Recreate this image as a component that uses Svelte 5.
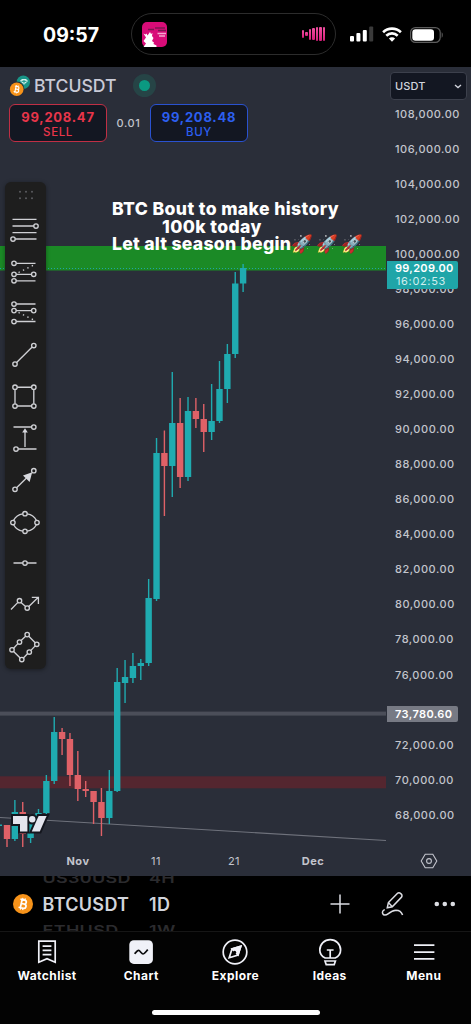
<script lang="ts">
	type Candle = { open: number; close: number; high: number; low: number };

	// y coordinates inside the plot; close above open is a rising candle
	const candles: Candle[] = [
		{ open: 758, close: 772, high: 758, low: 780 },
		{ open: 772, close: 745, high: 733, low: 774 },
		{ open: 745, close: 767, high: 735, low: 780 },
		{ open: 771, close: 755, high: 750, low: 776 },
		{ open: 755, close: 746, high: 742, low: 757 },
		{ open: 746, close: 714, high: 708, low: 747 },
		{ open: 714, close: 665, high: 650, low: 717 },
		{ open: 665, close: 672, high: 661, low: 688 },
		{ open: 672, close: 708, high: 666, low: 719 },
		{ open: 708, close: 722, high: 684, low: 734 },
		{ open: 722, close: 724, high: 714, low: 730 },
		{ open: 724, close: 735, high: 724, low: 757 },
		{ open: 735, close: 751, high: 721, low: 769 },
		{ open: 751, close: 724, high: 703, low: 757 },
		{ open: 724, close: 615, high: 601, low: 725 },
		{ open: 616, close: 610, high: 593, low: 636 },
		{ open: 611, close: 599, high: 586, low: 616 },
		{ open: 599, close: 596, high: 592, low: 613 },
		{ open: 596, close: 531, high: 512, low: 599 },
		{ open: 532, close: 386, high: 371, low: 534 },
		{ open: 386, close: 399, high: 363.5, low: 449 },
		{ open: 399, close: 356, high: 305, low: 430 },
		{ open: 356, close: 410, high: 331, low: 421 },
		{ open: 410, close: 344, high: 330, low: 414 },
		{ open: 344, close: 352, high: 331, low: 361 },
		{ open: 352, close: 365, high: 337, low: 385 },
		{ open: 365, close: 354, high: 317, low: 373 },
		{ open: 354, close: 322, high: 294, low: 356 },
		{ open: 322, close: 287, high: 277, low: 336 },
		{ open: 287, close: 216.5, high: 205, low: 291 },
		{ open: 216.5, close: 201, high: 197, low: 225 }
	];
	const step = 7.87;

	const prices = Array.from({ length: 21 }, (_, i) => 108000 - i * 2000);
	const format = (n: number) => n.toLocaleString('en-US', { minimumFractionDigits: 2 });

	const tools = [
		{
			d: 'M3.5 5.3H27.5M3.5 12H25M3.5 18.6H27.5M6.3 25H27.5',
			dots: [[27, 12], [4, 25]]
		},
		{
			d: 'M7.2 7.3H26.5M7.2 18.3H22.5M7.2 24.8H26.5',
			dashed: 'M9.5 16.5L26 8.5',
			dots: [[5, 7.3], [5, 18.3], [24.7, 18.3], [5, 24.8]]
		},
		{
			d: 'M7.2 7H26.5M7.2 13.6H22.5M7.2 24.5H26.5',
			dashed: 'M9.5 15.5L26 23.5',
			dots: [[5, 7], [5, 13.6], [24.7, 13.6], [5, 24.5]]
		},
		{ d: 'M7.6 23.4L23.2 8.1', dots: [[6, 25], [24.8, 6.5]] },
		{
			d: 'M8.2 6.2H22.6M24.8 8.4V22.8M22.6 25H8.2M6 22.8V8.4',
			dots: [[6, 6.2], [24.8, 6.2], [24.8, 25], [6, 25]]
		},
		{
			d: 'M4.5 5H22.6M16 25V9M9.2 27H27.5',
			fill: 'M16 6.2L18.8 10.4H13.2Z',
			dots: [[24.8, 5], [7, 27]]
		},
		{
			d: 'M7.6 23.7L18 13.4',
			fill: 'M23.2 8.2L20.6 18L14 11.4Z',
			dots: [[6, 25.3], [24.8, 6.7]]
		},
		{
			d: 'M4.6 14.4C6.4 11 9.8 8.6 13.7 7.9M18.3 7.9C22.2 8.6 25.6 11 27.4 14.4M27.4 18.7C25.6 22 22.2 24.4 18.3 25.1M13.7 25.1C9.8 24.4 6.4 22 4.6 18.7',
			dots: [[3.9, 16.5], [16, 7.7], [28, 16.5], [16, 25.3]]
		},
		{ d: 'M4.5 16H13.8M18.2 16H27.5', dots: [[16, 16]] },
		{
			d: 'M2 20.5L8.9 13.4M12 13.4L16.6 17.4M19.8 17.4L29.3 8.3M22.8 8.4H29.4V15',
			dots: [[10.5, 11.7], [18.2, 19]]
		},
		{
			d: 'M19.8 5.2L26.2 11.7M26.2 14.9L21.9 19.4M18.7 22.6L14.4 26.9M11.2 26.9L4.6 20.4M4.6 17.2L8.9 12.6M12.1 9.4L16.6 5.2',
			dots: [[18.2, 3.6], [27.8, 13.3], [20.3, 21], [12.8, 28.5], [3, 18.8], [10.5, 11]]
		}
	];

	const wheel = [
		{ symbol: 'US30USD', interval: '4H' },
		{ symbol: 'BTCUSDT', interval: '1D' },
		{ symbol: 'ETHUSD', interval: '1W' }
	];

	const tabs = ['Watchlist', 'Chart', 'Explore', 'Ideas', 'Menu'];
	const sound = [8, 4, 11, 12, 14, 14, 14];
</script>

{#snippet bitcoin()}
	<circle cx="10" cy="10" r="10" fill="#f7931a" />
	<g transform="rotate(13 10 10)" fill="none" stroke="#fff" stroke-width="1.7">
		<path d="M8.2 5.8V14.2M6.4 5.8H10.8a2 2 0 0 1 0 4H8.2M10.8 9.8h.5a2.2 2.2 0 0 1 0 4.4H6.4" />
		<path d="M8.6 4V5.8M11 4V5.8M8.6 14V16M11 14V16" stroke-width="1.2" />
	</g>
{/snippet}

{#snippet logo()}
	<path d="M13 749H27.4V764.5H20V757H13Z" />
	<path d="M38.6 749H46.6L39.8 764.5H31.8Z" />
	<circle cx="32.2" cy="752.2" r="3.2" />
{/snippet}

<div class="phone">
	<header class="status">
		<time>09:57</time>
		<div class="island">
			<svg class="cover" viewBox="0 0 25 25">
				<rect width="25" height="25" rx="5" fill="#d80c78" />
				<path d="M6 7.5h6M13 6h10M16 8.5h8" stroke="#7c1650" stroke-width="1.6" />
				<path d="M15.5 11.5H24M17 14h6" stroke="#f5a8d0" stroke-width="1.3" />
				<path d="M1.5 11.5l2 1 1-1 1 2 2.5-3.5 1 2 1.5-1-.5 3 1.5 2-1.5 3 2 1.5-.5 1.5 3 1.5v1.5H1.5l2.5-3.5L1.5 19l2.5-3.5z" fill="#fff" />
			</svg>
			<div class="sound">
				{#each sound as h}
					<i style="height: {h}px"></i>
				{/each}
			</div>
		</div>
		<svg class="signal" viewBox="0 0 24 16">
			<rect x="0" y="10" width="4" height="5.5" rx="1" fill="#fff" />
			<rect x="6.4" y="7" width="4" height="8.5" rx="1" fill="#fff" />
			<rect x="12.8" y="4" width="4" height="11.5" rx="1" fill="#fff" />
			<rect x="19.2" y="0.5" width="4" height="15" rx="1" fill="#3a3a3a" />
		</svg>
		<svg class="wifi" viewBox="0 0 20 15" fill="none" stroke="#fff" stroke-width="2.6">
			<path d="M1.1 5.2a12.8 12.8 0 0 1 17.8 0" />
			<path d="M4.3 8.7a8.2 8.2 0 0 1 11.4 0" />
			<path d="M10 14.8L6.9 11.6a4.4 4.4 0 0 1 6.2 0Z" fill="#fff" stroke="none" />
		</svg>
		<svg class="battery" viewBox="0 0 34 16">
			<rect x="0.6" y="0.6" width="29.6" height="14.8" rx="4.8" fill="none" stroke="#5c5c5c" stroke-width="1.2" />
			<rect x="2.3" y="2.2" width="21.7" height="11.6" rx="3.2" fill="#fff" />
			<path d="M31.7 5.3c1.4.6 1.4 4.8 0 5.4z" fill="#5c5c5c" />
		</svg>
	</header>

	<main class="chart">
		<div class="pane">
			<svg class="plot" viewBox="0 0 386 809">
				<rect y="179" width="386" height="24.5" fill="#1b8a26" />
				<rect y="644.6" width="386" height="4" fill="#4b4e59" />
				<rect y="709.3" width="386" height="12" fill="#54262f" />
				<path d="M0 201.5H386" stroke="#1fa7a5" stroke-width="1" stroke-dasharray="1 2" />
				<path d="M0 750.5L386 773.5" stroke="#6f727c" stroke-width="1.2" />
				<rect y="757.5" width="2" height="1.5" fill="#1fabb0" />
				{#each candles as c, i}
					{@const color = c.close < c.open ? '#1fabb0' : '#df6167'}
					{@const x = 7 + i * step}
					<rect x={x - 0.7} y={c.high} width="1.4" height={c.low - c.high} fill={color} />
					<rect
						x={x - 3.2}
						y={Math.min(c.open, c.close)}
						width="6.4"
						height={Math.abs(c.open - c.close)}
						fill={color}
					/>
				{/each}
				<g fill="#14161e" stroke="#14161e" stroke-width="4">{@render logo()}</g>
				<g fill="#e4e5ee">{@render logo()}</g>
			</svg>

			<div class="symbol">
				<svg class="pair" viewBox="0 0 22 22">
					<circle cx="14.3" cy="7.3" r="6.7" fill="#189587" />
					<path d="M11 5.8L13 4h4l2 2-4 3.8z" fill="#d5efeb" />
					<path d="M12.5 6.3h5M15 5v3.5" stroke="#189587" />
					<circle cx="7.7" cy="14.3" r="7.7" fill="#2a2e39" />
					<g transform="translate(0.9 7.5) scale(0.68)">{@render bitcoin()}</g>
				</svg>
				<h1>BTCUSDT</h1>
				<span class="live"></span>
			</div>

			<div class="trade">
				<button class="sell"><b>99,208.47</b><span>SELL</span></button>
				<span class="spread">0.01</span>
				<button class="buy"><b>99,208.48</b><span>BUY</span></button>
			</div>

			<div class="note">
				<p>BTC Bout to make history</p>
				<p class="second">100k today</p>
				<p class="third">Let alt season begin<span>🚀</span><span>🚀</span><span>🚀</span></p>
			</div>

			<div class="tools">
				<svg class="grip" viewBox="0 0 16 10" fill="#5b5c60">
					{#each [2, 8, 14] as x}
						<circle cx={x} cy="1.8" r="1" />
						<circle cx={x} cy="8.2" r="1" />
					{/each}
				</svg>
				{#each tools as tool}
					<svg class="tool" viewBox="0 0 32 32">
						<path d={tool.d} />
						{#if tool.dashed}<path d={tool.dashed} stroke-dasharray="1.4 3.5" />{/if}
						{#if tool.fill}<path d={tool.fill} class="head" />{/if}
						{#each tool.dots as [x, y]}
							<circle cx={x} cy={y} r="2.2" />
						{/each}
					</svg>
				{/each}
			</div>
		</div>

		<aside class="scale">
			<button class="currency">
				USDT
				<svg viewBox="0 0 8 5"><path d="M1 1l3 2.6L7 1" /></svg>
			</button>
			<ul>
				{#each prices as p}
					<li>{format(p)}</li>
				{/each}
			</ul>
			<div class="tag last"><b>99,209.00</b><span>16:02:53</span></div>
			<div class="tag level">73,780.60</div>
		</aside>

		<div class="dates">
			<b>Nov</b><span>11</span><span>21</span><b>Dec</b>
			<svg viewBox="0 0 18 16">
				<path d="M5.2 1.2h7.6L16.8 8l-4 6.8H5.2L1.2 8z" />
				<circle cx="9" cy="8" r="2.4" />
			</svg>
		</div>
	</main>

	<section class="bar">
		<svg class="coin" viewBox="0 0 20 20">{@render bitcoin()}</svg>
		<div class="wheel">
			{#each wheel as row, i}
				<div class="row" class:ghost={i !== 1}>
					<span class="name">{row.symbol}</span><span>{row.interval}</span>
				</div>
			{/each}
		</div>
		<svg class="plus" viewBox="0 0 20 20"><path d="M10 0.5V19.5M0.5 10H19.5" /></svg>
		<svg class="pen" viewBox="0 0 24 26">
			<path d="M6.3 16.7L7.4 11.6L16.3 2.4a2.3 2.3 0 0 1 3.3 0l.7.7a2.3 2.3 0 0 1 0 3.3L11.3 15.7Z" />
			<path d="M7.4 11.6L11.3 15.7" />
			<path d="M3.8 18.6C1.8 19.2 1 21 1.7 22.6C2.5 24.5 5 24.4 7 22.8C9.6 20.7 12 19.3 15 19.2C18.3 19.2 20.6 21.3 21.6 24" />
		</svg>
		<svg class="more" viewBox="0 0 22 6">
			<circle cx="2.8" cy="3" r="2.3" /><circle cx="10.8" cy="3" r="2.3" /><circle cx="18.8" cy="3" r="2.3" />
		</svg>
	</section>

	<nav class="tabs">
		{#each tabs as tab}
			<a href="#{tab.toLowerCase()}">
				<svg viewBox="0 0 28 28">
					{#if tab === 'Watchlist'}
						<path d="M5.8 3.2H22.2V24.2L14 20.7L5.8 24.2Z" />
						<path d="M9.6 8.2H18.4M9.6 12.4H18.4M9.6 16.6H18.4" />
					{:else if tab === 'Chart'}
						<rect x="2.3" y="2.3" width="23.6" height="23.6" rx="4.5" fill="#f0f1f8" stroke="none" />
						<path d="M7.6 15.8C9.5 13.6 10.5 12.4 11.6 12.4C13 12.4 14.6 16 16 16C17.2 16 18.8 13.8 20.8 11.6" stroke="#0b0b0d" />
					{:else if tab === 'Explore'}
						<circle cx="14" cy="14" r="11.8" />
						<path d="M19.8 8.2L17 17L8.2 19.8L11 11Z" />
						<path d="M19.8 8.2L17 17L11 11Z" fill="#f0f1f8" />
						<circle cx="13.6" cy="14.4" r="1.6" fill="#050505" stroke="none" />
					{:else if tab === 'Ideas'}
						<path d="M9.2 20C5.6 18.3 3.8 15.6 3.8 12a10.4 10.4 0 0 1 20.8 0C24.6 15.6 22.8 18.3 19.2 20Z" />
						<path d="M10.8 12H17.6M14.2 12V20M9 23H19.4L18.2 26.6H10.2Z" />
					{:else}
						<path d="M4 7.2H24.4M4 14.1H24.4M4 20.9H24.4" />
					{/if}
				</svg>
				{tab}
			</a>
		{/each}
	</nav>
	<div class="home"></div>
</div>

<style>
	:global(body) {
		background: #000;
	}

	.phone {
		display: flex;
		flex-direction: column;
		width: 471px;
		height: 1024px;
		overflow: hidden;
		background: #030303;
		color: #d1d4dc;
		font-family: Inter, 'Liberation Sans', sans-serif;
	}

	svg {
		display: block;
		flex: none;
	}

	button {
		font: inherit;
		padding: 0;
	}

	.status {
		display: flex;
		align-items: center;
		flex: none;
		box-sizing: border-box;
		height: 67px;
		padding: 1px 0 0 43px;
		background: #000;
	}

	time {
		width: 88px;
		padding-top: 2px;
		box-sizing: border-box;
		color: #fff;
		font-size: 19.5px;
		font-weight: 700;
	}

	.island {
		display: flex;
		align-items: center;
		justify-content: space-between;
		box-sizing: border-box;
		width: 205px;
		height: 42px;
		padding: 0 10px;
		border: 1px solid #2c2c2c;
		border-radius: 21px;
		background: #000;
	}

	.cover {
		width: 25px;
		height: 25px;
	}

	.sound {
		display: flex;
		align-items: center;
		gap: 1.3px;
	}

	.sound i {
		width: 2.2px;
		border-radius: 1px;
		background: linear-gradient(#f04fa0, #d61f7b);
	}

	.signal {
		width: 24px;
		height: 16px;
		margin-left: 14px;
	}

	.wifi {
		width: 20px;
		height: 15px;
		margin-left: 8px;
	}

	.battery {
		width: 34px;
		height: 16px;
		margin: 1px 0 0 8px;
	}

	.chart {
		display: grid;
		grid-template-columns: 386px 85px;
		grid-template-rows: 779px 30px;
		flex: none;
		background: #2a2e39;
	}

	.pane {
		position: relative;
	}

	.plot {
		position: absolute;
		inset: 0;
		width: 386px;
		height: 809px;
	}

	.symbol {
		position: relative;
		display: flex;
		align-items: center;
		height: 37px;
		padding-left: 9px;
	}

	.pair {
		width: 22px;
		height: 22px;
	}

	h1 {
		width: 99px;
		margin: 0 0 0 3px;
		color: #c9cad6;
		font-size: 17.6px;
		font-weight: 450;
	}

	.live {
		width: 11px;
		height: 11px;
		border: 6px solid #264446;
		border-radius: 50%;
		background: #0b9981;
	}

	.trade {
		position: relative;
		display: flex;
		align-items: center;
		padding-left: 9px;
	}

	.sell,
	.buy {
		display: flex;
		flex-direction: column;
		align-items: center;
		justify-content: center;
		box-sizing: border-box;
		width: 98px;
		height: 38px;
		padding-top: 2px;
		border: 1px solid;
		border-radius: 6px;
		background: #131722;
		font-size: 11.5px;
		font-weight: 500;
		line-height: 15px;
		letter-spacing: 0.6px;
	}

	.sell b,
	.buy b {
		font-size: 13px;
		letter-spacing: 0.75px;
		line-height: 16px;
	}

	.sell {
		border-color: #c02f45;
		color: #e8354a;
	}

	.buy {
		border-color: #2a52d0;
		color: #2c5ff0;
	}

	.spread {
		width: 43px;
		color: #c3c5cd;
		font-size: 11px;
		font-weight: 500;
		letter-spacing: 0.6px;
		text-align: center;
	}

	.note {
		position: absolute;
		top: 133px;
		left: 112px;
		color: #fff;
		font-size: 17.6px;
		font-weight: 850;
		line-height: 17.5px;
		letter-spacing: 0.38px;
		white-space: nowrap;
	}

	.note p {
		display: flex;
		height: 17.5px;
		margin: 0;
	}

	.note .second {
		padding-left: 50px;
	}

	.note .third {
		letter-spacing: 0.28px;
	}

	.note .third span {
		width: 25px;
	}

	.tools {
		position: absolute;
		top: 115px;
		left: 5px;
		display: flex;
		flex-direction: column;
		align-items: center;
		gap: 9.7px;
		box-sizing: border-box;
		width: 41px;
		height: 487px;
		padding-top: 8px;
		border-radius: 6px;
		background: #1e1e1e;
		box-shadow: 0 1px 4px rgba(0, 0, 0, 0.4);
	}

	.grip {
		width: 16px;
		height: 10px;
		margin-bottom: 4.3px;
	}

	.tool {
		width: 32px;
		height: 32px;
		margin-right: 1px;
		fill: none;
		stroke: #cfd0d4;
		stroke-width: 1.35;
	}

	.tool .head {
		fill: #d8d9df;
		stroke: none;
	}

	.scale {
		position: relative;
	}

	.currency {
		display: flex;
		align-items: center;
		justify-content: space-between;
		box-sizing: border-box;
		width: 77px;
		height: 28px;
		margin: 5px 0 0 4px;
		padding: 0 4px;
		border: 1px solid #3c404c;
		border-radius: 4px;
		background: #131722;
		color: #d1d4dc;
		font-size: 11px;
		font-weight: 500;
		letter-spacing: 0.1px;
	}

	.currency svg {
		width: 8px;
		height: 5px;
		fill: none;
		stroke: #d1d4dc;
		stroke-width: 1.3;
	}

	ul {
		display: flex;
		flex-direction: column;
		gap: 21.07px;
		margin: 6.5px 0 0 9px;
		padding: 0;
		list-style: none;
		color: #c3c5cd;
		font-size: 11px;
		font-weight: 500;
		line-height: 14px;
		letter-spacing: 0.53px;
	}

	li {
		height: 14px;
	}

	.tag {
		position: absolute;
		left: 1px;
		box-sizing: border-box;
		width: 71px;
		padding-left: 8px;
		border-radius: 0 2px 2px 0;
		color: #fff;
		font-size: 11px;
		letter-spacing: 0.4px;
	}

	.last {
		top: 194px;
		display: flex;
		flex-direction: column;
		height: 28px;
		padding-top: 1px;
		background: #1fa5a8;
		line-height: 13px;
	}

	.last b {
		font-weight: 600;
		letter-spacing: 0.3px;
	}

	.last span {
		padding-left: 1px;
		color: #d0eeee;
		letter-spacing: 0.65px;
	}

	.level {
		top: 639px;
		height: 16px;
		background: #777a84;
		font-weight: 600;
		line-height: 16px;
	}

	.dates {
		grid-column: 1 / 3;
		display: grid;
		grid-template-columns: 78px 78px 78px 80px 38px;
		align-items: center;
		margin-left: 39px;
		color: #c3c5cd;
		font-size: 11px;
		text-align: center;
		letter-spacing: 0.5px;
	}

	.dates svg {
		width: 18px;
		height: 16px;
		margin-left: 67px;
		fill: none;
		stroke: #c3c5cd;
		stroke-width: 1.1;
	}

	.bar {
		display: flex;
		align-items: center;
		flex: none;
		box-sizing: border-box;
		height: 56px;
		padding-left: 13px;
		border-bottom: 1px solid #161616;
		background: #000;
	}

	.coin {
		width: 20px;
		height: 20px;
	}

	.wheel {
		display: flex;
		flex-direction: column;
		justify-content: center;
		gap: 2px;
		width: 297px;
		height: 55px;
		overflow: hidden;
		font-size: 18px;
		font-weight: 600;
		line-height: 24px;
		letter-spacing: 0.3px;
	}

	.row {
		display: flex;
		flex: none;
		padding: 1px 0 0 9.5px;
		height: 23px;
	}

	.row .name {
		width: 106.5px;
	}

	.ghost {
		color: #2b2b2e;
		transform: scaleY(0.75);
	}

	.plus {
		width: 20px;
		height: 20px;
	}

	.pen {
		width: 24px;
		height: 26px;
		margin-left: 31px;
	}

	.more {
		width: 22px;
		height: 6px;
		margin-left: 29px;
		fill: #dcdde3;
	}

	.plus,
	.pen {
		fill: none;
		stroke: #dcdde3;
		stroke-width: 1.5;
	}

	.tabs {
		display: grid;
		grid-template-columns: repeat(5, 1fr);
		flex: none;
		height: 72px;
		padding-top: 6px;
	}

	.tabs a {
		display: flex;
		flex-direction: column;
		align-items: center;
		gap: 2px;
		color: #fff;
		font-size: 12px;
		font-weight: 700;
		line-height: 16px;
		letter-spacing: 0.45px;
		text-decoration: none;
	}

	.tabs svg {
		width: 28px;
		height: 28px;
		fill: none;
		stroke: #f0f1f8;
		stroke-width: 1.7;
	}

	.home {
		width: 168px;
		height: 5px;
		margin: 0 auto;
		border-radius: 3px;
		background: #fff;
	}
</style>
